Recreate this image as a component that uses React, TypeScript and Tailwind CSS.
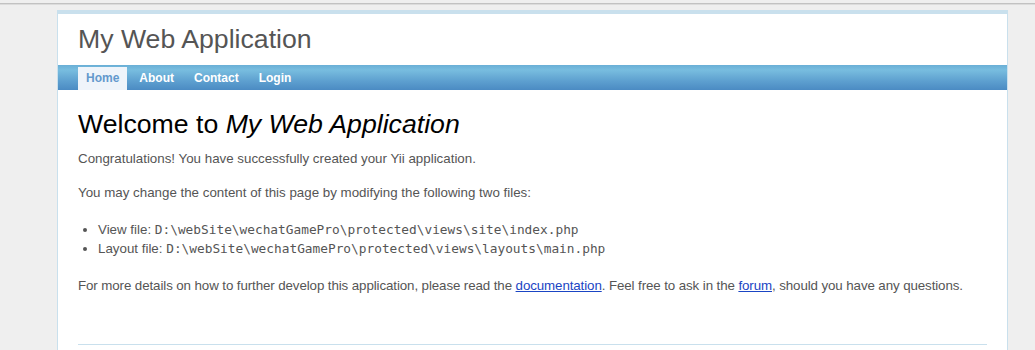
import React from 'react'

const menu = [
  { label: 'Home', active: true },
  { label: 'About', active: false },
  { label: 'Contact', active: false },
  { label: 'Login', active: false },
]

const App = () => {
  return (
    <div className="min-h-screen bg-[#efefef] font-['Liberation_Sans',Arial,sans-serif] text-[13.33px] text-[#555]">
      <div className="h-[3px]" />
      <div className="h-[1px] bg-[#c2c2c2]" />
      <div className="h-[1px] bg-[#dcdcdc]" />

      <div className="ml-[57px] mt-[5px] w-[951px] border border-[#c9e0ed] bg-white">
        {/* header */}
        <div className="border-t-[3px] border-[#c9e0ed] px-[20px] py-[10px] text-[26.67px] leading-[31px] text-[#555]">
          My Web Application
        </div>

        {/* main menu */}
        <div className="flex h-[25px] gap-[4px] pl-[20px] bg-[linear-gradient(#6aafd6_0%,#78bddf_20%,#5d9fcf_65%,#4b8bc3_100%)]">
          {menu.map((item) => (
            <a
              key={item.label}
              href="#"
              className={
                item.active
                  ? 'mt-[2px] h-[23px] px-[8px] text-[12px] font-bold leading-[23px] text-[#6399cd] bg-[#eff4fa]'
                  : 'mt-[2px] h-[23px] px-[8px] text-[12px] font-bold leading-[23px] text-white'
              }
            >
              {item.label}
            </a>
          ))}
        </div>

        {/* content */}
        <div className="px-[20px] pb-[6px]">
          <h1 className="mt-[19px] text-[26.67px] leading-[30px] font-normal text-black">
            Welcome to <i>My Web Application</i>
          </h1>

          <p className="mt-[11px] leading-[18px]">
            Congratulations! You have successfully created your Yii application.
          </p>

          <p className="mt-[16px] leading-[18px]">
            You may change the content of this page by modifying the following two files:
          </p>

          <ul className="mt-[18px] list-disc pl-[20px] leading-[19px]">
            <li>
              View file: <code className="font-['DejaVu_Sans_Mono',monospace] text-[12.8px]">D:\webSite\wechatGamePro\protected\views\site\index.php</code>
            </li>
            <li>
              Layout file: <code className="font-['DejaVu_Sans_Mono',monospace] text-[12.8px]">D:\webSite\wechatGamePro\protected\views\layouts\main.php</code>
            </li>
          </ul>

          <p className="mt-[19px] leading-[18px] tracking-[-0.1px]">
            For more details on how to further develop this application, please read the{' '}
            <a href="#" className="text-[#1a45c4] underline">documentation</a>. Feel free to ask in the{' '}
            <a href="#" className="text-[#1a45c4] underline">forum</a>, should you have any questions.
          </p>

          <div className="mt-[49px] border-t border-[#c9e0ed]" />
        </div>
      </div>
    </div>
  )
}

export default App
